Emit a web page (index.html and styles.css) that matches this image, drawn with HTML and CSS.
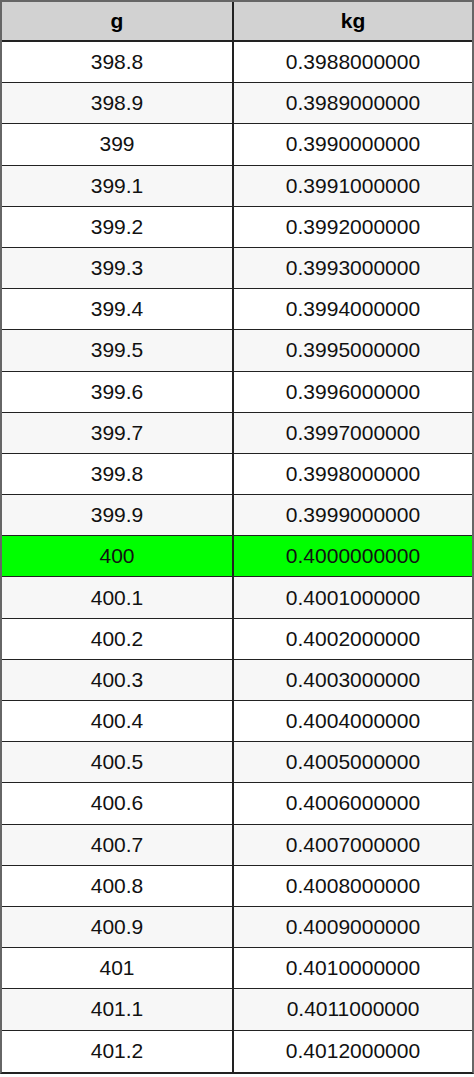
FILE: index.html
```html
<!DOCTYPE html>
<html>
<head>
<meta charset="utf-8">
<link rel="stylesheet" href="styles.css">
</head>
<body>
<table class="conv">
<thead>
<tr class="head"><th>g</th><th>kg</th></tr>
</thead>
<tbody>
<tr><td>398.8</td><td>0.3988000000</td></tr>
<tr class="alt"><td>398.9</td><td>0.3989000000</td></tr>
<tr><td>399</td><td>0.3990000000</td></tr>
<tr class="alt"><td>399.1</td><td>0.3991000000</td></tr>
<tr><td>399.2</td><td>0.3992000000</td></tr>
<tr class="alt"><td>399.3</td><td>0.3993000000</td></tr>
<tr><td>399.4</td><td>0.3994000000</td></tr>
<tr class="alt"><td>399.5</td><td>0.3995000000</td></tr>
<tr><td>399.6</td><td>0.3996000000</td></tr>
<tr class="alt"><td>399.7</td><td>0.3997000000</td></tr>
<tr><td>399.8</td><td>0.3998000000</td></tr>
<tr class="alt"><td>399.9</td><td>0.3999000000</td></tr>
<tr class="hit"><td>400</td><td>0.4000000000</td></tr>
<tr class="alt"><td>400.1</td><td>0.4001000000</td></tr>
<tr><td>400.2</td><td>0.4002000000</td></tr>
<tr class="alt"><td>400.3</td><td>0.4003000000</td></tr>
<tr><td>400.4</td><td>0.4004000000</td></tr>
<tr class="alt"><td>400.5</td><td>0.4005000000</td></tr>
<tr><td>400.6</td><td>0.4006000000</td></tr>
<tr class="alt"><td>400.7</td><td>0.4007000000</td></tr>
<tr><td>400.8</td><td>0.4008000000</td></tr>
<tr class="alt"><td>400.9</td><td>0.4009000000</td></tr>
<tr><td>401</td><td>0.4010000000</td></tr>
<tr class="alt"><td>401.1</td><td>0.4011000000</td></tr>
<tr><td>401.2</td><td>0.4012000000</td></tr>
</tbody>
</table>
</body>
</html>
```

FILE: styles.css
```css
html, body {
  margin: 0;
  padding: 0;
  background: #ffffff;
}

.conv {
  width: 474px;
  border-collapse: separate;
  border-spacing: 0;
  table-layout: fixed;
  border-top: 2px solid #666666;
  border-left: 2px solid #666666;
  border-right: 2px solid #666666;
  border-bottom: 2px solid #222222;
  font-family: "Liberation Sans", Arial, sans-serif;
  font-size: 21px;
  color: #111111;
}

.conv th,
.conv td {
  padding: 0;
  text-align: center;
  vertical-align: middle;
  border-bottom: 1px solid #222222;
}

.conv th:first-child,
.conv td:first-child {
  width: 230px;
  border-right: 2px solid #222222;
}

.conv tbody tr:last-child td {
  border-bottom: none;
}

.conv .head {
  height: 40px;
  background: #d2d2d2;
}

.conv .head th {
  font-weight: bold;
  color: #000000;
  border-bottom: 2px solid #222222;
}

.conv tbody tr {
  height: 41.2px;
  background: #ffffff;
}

.conv tbody tr.alt {
  background: #f7f7f7;
}

.conv tbody tr.hit {
  background: #00ff00;
}
```
